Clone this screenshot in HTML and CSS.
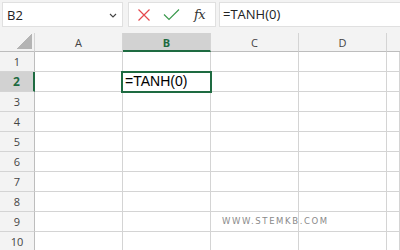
FILE: index.html
```html
<!DOCTYPE html>
<html>
<head>
<meta charset="utf-8">
<link rel="stylesheet" href="styles.css">
</head>
<body>
<div class="app">
  <div class="toolbar">
    <div class="namebox">
      <span class="name">B2</span>
      <svg class="chev" width="8" height="5" viewBox="0 0 8 5"><path d="M1 1 L4 4 L7 1" fill="none" stroke="#444" stroke-width="1.1"/></svg>
    </div>
    <div class="fxbox">
      <svg class="ico" width="14" height="14" viewBox="0 0 14 14"><path d="M1.5 1.5 L12.5 12.5 M12.5 1.5 L1.5 12.5" stroke="#e5484d" stroke-width="1.2" fill="none"/></svg>
      <svg class="ico" width="17" height="13" viewBox="0 0 17 13"><path d="M1 6.5 L6 11.5 L16 1.5" stroke="#3c9a4e" stroke-width="1.2" fill="none"/></svg>
      <span class="fx">fx</span>
    </div>
    <div class="formula">=TANH(0)</div>
  </div>
  <div class="sheet">
    <div class="corner"><span class="tri"></span></div>
    <div class="colh">A</div>
    <div class="colh sel">B</div>
    <div class="colh">C</div>
    <div class="colh">D</div>
    <div class="colh edge"></div>

    <div class="rowh">1</div><div class="cell"></div><div class="cell"></div><div class="cell"></div><div class="cell"></div><div class="cell edge"></div>
    <div class="rowh sel">2</div><div class="cell"></div><div class="cell active">=TANH(0)</div><div class="cell"></div><div class="cell"></div><div class="cell edge"></div>
    <div class="rowh">3</div><div class="cell"></div><div class="cell"></div><div class="cell"></div><div class="cell"></div><div class="cell edge"></div>
    <div class="rowh">4</div><div class="cell"></div><div class="cell"></div><div class="cell"></div><div class="cell"></div><div class="cell edge"></div>
    <div class="rowh">5</div><div class="cell"></div><div class="cell"></div><div class="cell"></div><div class="cell"></div><div class="cell edge"></div>
    <div class="rowh">6</div><div class="cell"></div><div class="cell"></div><div class="cell"></div><div class="cell"></div><div class="cell edge"></div>
    <div class="rowh">7</div><div class="cell"></div><div class="cell"></div><div class="cell"></div><div class="cell"></div><div class="cell edge"></div>
    <div class="rowh">8</div><div class="cell"></div><div class="cell"></div><div class="cell"></div><div class="cell"></div><div class="cell edge"></div>
    <div class="rowh">9</div><div class="cell"></div><div class="cell"></div><div class="cell wm-host"><span class="watermark">WWW.STEMKB.COM</span></div><div class="cell"></div><div class="cell edge"></div>
    <div class="rowh">10</div><div class="cell"></div><div class="cell"></div><div class="cell"></div><div class="cell"></div><div class="cell edge"></div>
  </div>
</div>
</body>
</html>
```
FILE: styles.css
```css
* { box-sizing: border-box; }
html, body { margin: 0; padding: 0; }
body {
  width: 400px;
  height: 250px;
  overflow: hidden;
  background: #ffffff;
  font-family: "Open Sans", "Noto Sans", "Liberation Sans", sans-serif;
  color: #222;
}
.app { width: 400px; height: 250px; overflow: hidden; }

.toolbar {
  height: 33px;
  background: #f3f3f3;
  display: flex;
  align-items: flex-start;
  padding: 2px 0 0 2px;
  gap: 0;
}
.namebox {
  width: 121px;
  height: 25px;
  background: #fff;
  border: 1px solid #e0e0e0;
  display: flex;
  align-items: center;
  justify-content: space-between;
  padding: 0 5px 0 4px;
}
.name { font-size: 13px; color: #222; }
.chev { margin-top: 1px; }
.fxbox {
  margin-left: 5px;
  width: 88px;
  height: 25px;
  background: #fff;
  border: 1px solid #e0e0e0;
  display: flex;
  align-items: center;
  padding-left: 8px;
}
.fxbox .ico:first-child { margin-right: 12px; }
.fxbox .ico:nth-child(2) { margin-right: 14px; }
.fx {
  font-family: "DejaVu Serif", "Liberation Serif", serif;
  font-style: italic;
  font-size: 13px;
  color: #333;
  letter-spacing: -0.5px;
}
.formula {
  margin-left: 3px;
  flex: 1;
  height: 25px;
  background: #fff;
  border: 1px solid #e0e0e0;
  border-right: none;
  font-size: 13px;
  line-height: 23px;
  padding-left: 3px;
  color: #222;
}

.sheet {
  display: grid;
  grid-template-columns: 35px 88px 88px 88px 88px 13px;
  grid-template-rows: 19px repeat(10, 20px);
}
.corner {
  background: #f3f3f3;
  border-right: 1px solid #d4d4d4;
  border-bottom: 1px solid #bdbdbd;
  position: relative;
}
.tri {
  position: absolute;
  right: 2px;
  bottom: 2px;
  width: 15px;
  height: 15px;
  background: linear-gradient(to bottom right, transparent 50%, #b4b4b4 50%);
}
.colh {
  background: #f3f3f3;
  border-right: 1px solid #d4d4d4;
  border-bottom: 1px solid #bdbdbd;
  font-size: 11px;
  color: #444;
  display: flex;
  align-items: center;
  justify-content: center;
  padding-top: 1px;
}
.colh.sel {
  background: #d2d2d2;
  color: #1e6b41;
  font-weight: 700;
  border-bottom: 2px solid #1e6b41;
}
.edge { border-right: none; }
.rowh {
  background: #f3f3f3;
  border-right: 1px solid #bdbdbd;
  border-bottom: 1px solid #d4d4d4;
  font-size: 11px;
  color: #444;
  display: flex;
  align-items: center;
  justify-content: center;
}
.rowh.sel {
  background: #d2d2d2;
  color: #1e6b41;
  font-weight: 700;
  border-right: 2px solid #1e6b41;
  font-size: 12px;
}
.cell {
  border-right: 1px solid #d4d4d4;
  border-bottom: 1px solid #d4d4d4;
  background: #fff;
}
.cell.active {
  position: relative;
  font-family: "Liberation Sans", "Open Sans", sans-serif;
  font-size: 14px;
  line-height: 19px;
  padding-left: 2px;
  color: #000;
  white-space: nowrap;
}
.cell.active::after {
  content: "";
  position: absolute;
  left: -2px;
  top: -1px;
  right: -2px;
  bottom: -2px;
  border: 2px solid #1e6b41;
}
.wm-host { position: relative; }
.watermark {
  position: absolute;
  left: 11px;
  top: 4px;
  font-family: "DejaVu Sans", "Liberation Sans", sans-serif;
  font-size: 8.5px;
  letter-spacing: 1.6px;
  color: #8a8a8a;
  white-space: nowrap;
}
```
